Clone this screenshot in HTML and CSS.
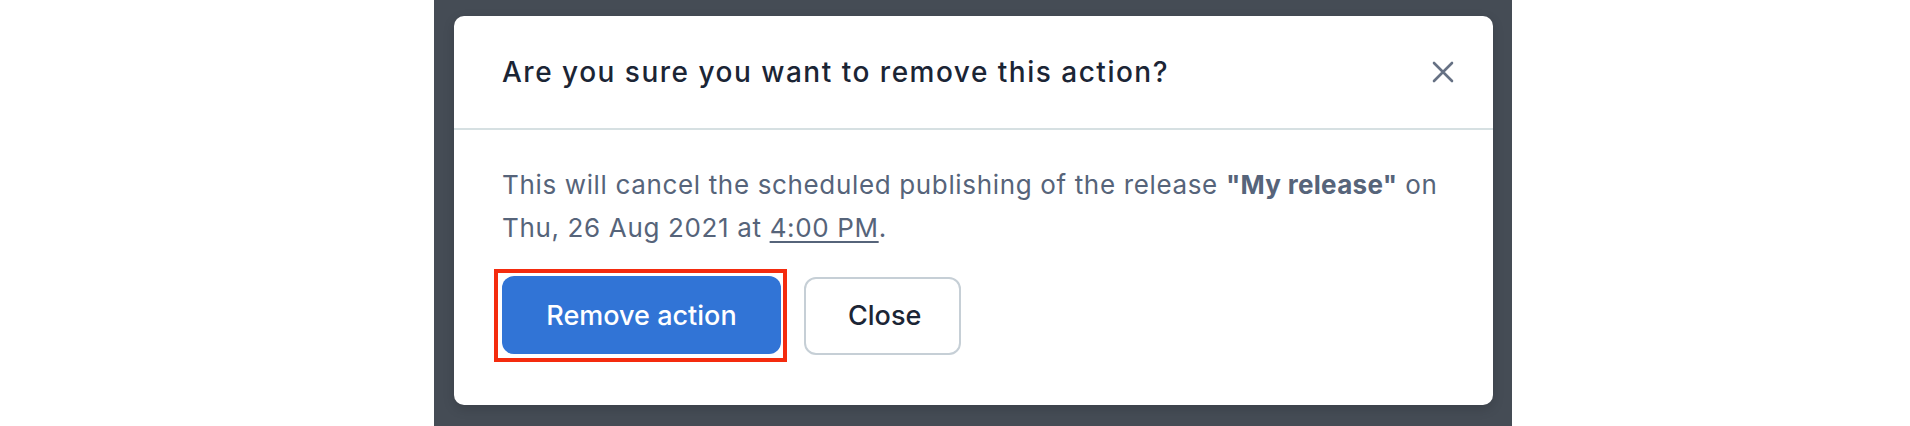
FILE: index.html
```html
<!DOCTYPE html>
<html>
    <head>
        <title>Remove action</title>
        <link rel="stylesheet" href="styles.css">
    </head>
    <body>
        <div class="overlay">
            <div class="modal">
                <div class="modal-header">
                    <h2>Are you sure you want to remove this action?</h2>
                    <button class="close-icon" aria-label="Close">
                        <svg width="22" height="22" viewBox="0 0 22 22">
                            <path d="M2 2 L20 20 M20 2 L2 20" stroke="#667184" stroke-width="2.6" stroke-linecap="round" fill="none"/>
                        </svg>
                    </button>
                </div>
                <div class="modal-body">
                    <p>This will cancel the scheduled publishing of the release <strong>"My release"</strong> on Thu, 26 Aug 2021 at <span class="time">4:00 PM</span>.</p>
                    <div class="actions">
                        <span class="highlight">
                            <button class="btn btn-primary">Remove action</button>
                        </span>
                        <button class="btn btn-secondary">Close</button>
                    </div>
                </div>
            </div>
        </div>
    </body>
</html>
```

FILE: styles.css
```css
body {
  margin: 0;
  padding: 0;
  background: #fff;
  font-family: 'Inter', 'Liberation Sans', Arial, sans-serif;
}

.overlay {
  margin-left: 434px;
  width: 1078px;
  height: 426px;
  box-sizing: border-box;
  padding: 16px 19px 0 20px;
  background: #454c55;
}

.modal {
  background: #fff;
  border-radius: 10px;
  height: 389px;
  box-shadow: 0 4px 12px rgba(0, 0, 0, 0.15);
}

.modal-header {
  display: flex;
  align-items: center;
  justify-content: space-between;
  height: 114px;
  box-sizing: border-box;
  padding: 0 39px 0 48px;
  border-bottom: 2px solid #d6e0e2;
}

.modal-header h2 {
  margin: 0;
  font-size: 28px;
  font-weight: 500;
  color: #1b2535;
  letter-spacing: 1.5px;
}

.close-icon {
  background: none;
  border: none;
  padding: 0;
  width: 22px;
  height: 22px;
  cursor: pointer;
}

.modal-body {
  padding: 33px 48px 0 48px;
}

.modal-body p {
  margin: 0;
  font-size: 26px;
  line-height: 43px;
  color: #56647a;
  letter-spacing: 0.65px;
}

.modal-body strong {
  font-weight: 700;
  letter-spacing: 0.3px;
}

.time {
  text-decoration: underline;
  text-underline-offset: 4px;
  text-decoration-thickness: 2px;
}

.actions {
  display: flex;
  align-items: center;
  gap: 17px;
  margin-top: 20px;
}

.highlight {
  display: inline-flex;
  margin-left: -8px;
  border: 4px solid #f42b0e;
  padding: 3px 2px 4px 4px;
}

.btn {
  height: 78px;
  padding: 0 42px;
  border-radius: 12px;
  font-family: inherit;
  font-size: 27px;
  font-weight: 500;
  cursor: pointer;
  box-sizing: border-box;
}

.btn-primary {
  background: #3174d6;
  border: none;
  color: #fff;
  width: 279px;
}

.btn-secondary {
  background: #fff;
  border: 2px solid #c6cfd6;
  color: #1b2535;
  width: 157px;
}
```
